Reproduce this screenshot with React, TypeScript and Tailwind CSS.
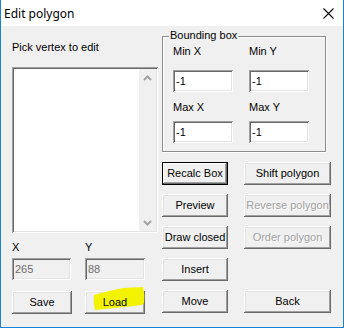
import type { ReactNode } from 'react';

const raised =
  'shadow-[inset_-1px_-1px_#696969,inset_1px_1px_#ffffff,inset_-2px_-2px_#a0a0a0,inset_2px_2px_#e3e3e3]';
const sunken =
  'shadow-[inset_1px_1px_#a0a0a0,inset_-1px_-1px_#ffffff,inset_2px_2px_#696969,inset_-2px_-2px_#e3e3e3]';

function Button({
  children,
  disabled = false,
  isDefault = false,
  className = '',
}: {
  children?: ReactNode;
  disabled?: boolean;
  isDefault?: boolean;
  className?: string;
}) {
  const frame = isDefault
    ? 'border border-black shadow-[inset_-1px_-1px_#696969,inset_1px_1px_#ffffff,inset_-2px_-2px_#a0a0a0]'
    : raised;
  const text = disabled ? 'text-[#a0a0a0] [text-shadow:1px_1px_0_#ffffff]' : 'text-black';
  return (
    <div className={`relative flex h-[23px] items-center justify-center bg-[#f0f0f0] ${frame} ${text} ${className}`}>
      {children}
    </div>
  );
}

function Edit({ value, disabled = false, className = '' }: { value: string; disabled?: boolean; className?: string }) {
  return (
    <div
      className={`flex h-[22px] items-center pl-[3px] ${sunken} ${
        disabled ? 'bg-[#f0f0f0] text-[#6d6d6d]' : 'bg-white text-black'
      } ${className}`}
    >
      {value}
    </div>
  );
}

function Chevron({ up }: { up: boolean }) {
  return (
    <svg width="9" height="6" viewBox="0 0 9 6">
      <path
        d={up ? 'M1 5 L4.5 1.5 L8 5' : 'M1 1 L4.5 4.5 L8 1'}
        fill="none"
        stroke="#a3a3a3"
        strokeWidth="2"
      />
    </svg>
  );
}

export default function App() {
  return (
    <div className="flex h-[328px] w-[344px] flex-col border-x border-b border-[#1883d7] bg-[#f0f0f0] font-['Liberation_Sans',Arial,sans-serif] text-[11px] leading-[13px] text-black">
      {/* title bar */}
      <div className="flex h-[26px] items-center justify-between bg-white pl-[3px] pr-[9px]">
        <span className="font-['Noto_Sans',sans-serif] text-[12px]">Edit polygon</span>
        <svg width="11" height="11" viewBox="0 0 11 11">
          <path d="M0.5 0.5 L10.5 10.5 M10.5 0.5 L0.5 10.5" stroke="#000" strokeWidth="1.1" />
        </svg>
      </div>

      <div className="flex pl-[11px]">
        {/* left column */}
        <div className="flex w-[146px] flex-col">
          <div className="mt-[15px]">Pick vertex to edit</div>
          <div className={`mt-[13px] flex h-[166px] p-[2px] ${sunken} bg-white`}>
            <div className="flex-1 bg-white" />
            <div className="flex w-[17px] flex-col justify-between bg-[#f0f0f0]">
              <div className="flex h-[17px] items-center justify-center">
                <Chevron up />
              </div>
              <div className="flex h-[17px] items-center justify-center">
                <Chevron up={false} />
              </div>
            </div>
          </div>
          <div className="mt-[8px] flex">
            <span className="w-[73px]">X</span>
            <span>Y</span>
          </div>
          <div className="mt-[4px] flex gap-[14px]">
            <Edit value="265" disabled className="w-[59px]" />
            <Edit value="88" disabled className="w-[60px]" />
          </div>
          <div className="mt-[11px] flex gap-[13px]">
            <Button className="w-[60px]">Save</Button>
            <Button className="w-[60px]">
              <svg className="absolute left-0 top-0 overflow-visible" width="60" height="23">
                <path
                  d="M9 4 Q22 0 38 -3 L58 -4 Q60 4 59 12 L57 14 Q30 17 10 19 Q8 12 9 4 Z"
                  fill="#f3f300"
                />
              </svg>
              <span className="relative">Load</span>
            </Button>
          </div>
        </div>

        {/* right column */}
        <div className="ml-[4px] flex w-[169px] flex-col">
          <div className="relative mt-[10px] h-[116px] w-[164px] border border-[#8c8c8c] pl-[10px] pt-[8px] shadow-[1px_1px_0_#ffffff,inset_1px_1px_0_#ffffff]">
            <span className="absolute left-[6px] top-[-8px] bg-[#f0f0f0] px-[1px]">Bounding box</span>
            <div className="grid grid-cols-[60px_60px] gap-x-[16px]">
              <span>Min X</span>
              <span>Min Y</span>
              <Edit value="-1" className="mt-[12px]" />
              <Edit value="-1" className="mt-[12px]" />
              <span className="mt-[9px]">Max X</span>
              <span className="mt-[9px]">Max Y</span>
              <Edit value="-1" className="mt-[7px]" />
              <Edit value="-1" className="mt-[7px]" />
            </div>
          </div>

          <div className="mt-[10px] grid grid-cols-[66px_87px] gap-x-[16px] gap-y-[9px]">
            <Button isDefault>Recalc Box</Button>
            <Button>Shift polygon</Button>
            <Button>Preview</Button>
            <Button disabled>Reverse polygon</Button>
            <Button>Draw closed</Button>
            <Button disabled>Order polygon</Button>
            <Button>Insert</Button>
            <div />
            <Button>Move</Button>
            <Button>Back</Button>
          </div>
        </div>
      </div>
    </div>
  );
}
